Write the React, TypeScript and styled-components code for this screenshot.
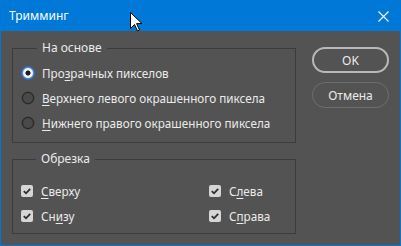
import styled, { createGlobalStyle } from "styled-components";

const Global = createGlobalStyle`
  html, body { margin: 0; padding: 0; background: #535353; }
  body { font-family: "Noto Sans", "Open Sans", sans-serif; font-size: 11.7px; }
`;

const App = () => {
  return (
    <>
      <Global />
      <Window>
        <TitleBar>
          <Title>Тримминг</Title>
          <Close>
            <svg width="11" height="11" viewBox="0 0 11 11">
              <path d="M0.5 0.5 L10.5 10.5 M10.5 0.5 L0.5 10.5" stroke="#fff" strokeWidth="1.1" />
            </svg>
          </Close>
          <Cursor width="13" height="20" viewBox="0 0 13 20">
            <path d="M0.5 0.5 L0.5 16.5 L4.5 12.5 L7.5 19 L9.5 18 L6.6 11.6 L12 11.6 Z" fill="#fff" stroke="#000" strokeWidth="1" />
          </Cursor>
        </TitleBar>
        <Body>
          <Groups>
            <Group $pad="4px 0 7px 9px">
              <Legend>На основе</Legend>
              <Row>
                <Radio $checked />
                <Label>Про<U>з</U>рачных пикселов</Label>
              </Row>
              <Row>
                <Radio />
                <Label><U>В</U>ерхнего левого окрашенного пиксела</Label>
              </Row>
              <Row>
                <Radio />
                <Label><U>Н</U>ижнего правого окрашенного пиксела</Label>
              </Row>
            </Group>
            <Group $pad="11px 0 5px 8px">
              <Legend>Обрезка</Legend>
              <Checks>
                <Row>
                  <Check><CheckMark /></Check>
                  <Label><U>С</U>верху</Label>
                </Row>
                <Row>
                  <Check><CheckMark /></Check>
                  <Label>С<U>л</U>ева</Label>
                </Row>
                <Row>
                  <Check><CheckMark /></Check>
                  <Label>Сн<U>и</U>зу</Label>
                </Row>
                <Row>
                  <Check><CheckMark /></Check>
                  <Label>С<U>п</U>рава</Label>
                </Row>
              </Checks>
            </Group>
          </Groups>
          <Buttons>
            <Button $primary>OK</Button>
            <Button>Отмена</Button>
          </Buttons>
        </Body>
      </Window>
    </>
  );
};
export default App;

const CheckMark = () => (
  <svg width="12" height="12" viewBox="0 0 12 12">
    <path d="M2.8 6.2 L5 8.3 L9.2 3.8" fill="none" stroke="#2e2e2e" strokeWidth="1.8" />
  </svg>
);

const Window = styled.div`
  width: 401px;
  height: 246px;
  box-sizing: border-box;
  border: 1px solid #0078d7;
  border-top: none;
  background: #535353;
  color: #ebebeb;
  overflow: hidden;
`;

const TitleBar = styled.div`
  position: relative;
  height: 31px;
  margin: 0 -1px;
  background: #0078d7;
  display: flex;
  align-items: center;
  justify-content: space-between;
  padding: 0 12px 0 9px;
`;

const Title = styled.span`
  color: #fff;
  font-size: 12px;
`;

const Close = styled.span`
  display: flex;
  padding-top: 1px;
`;

const Cursor = styled.svg`
  position: absolute;
  left: 130px;
  top: 12px;
`;

const Body = styled.div`
  display: flex;
  padding: 9px 0 0 11px;
  gap: 16px;
`;

const Groups = styled.div`
  display: flex;
  flex-direction: column;
  gap: 8px;
  width: 284px;
`;

const Group = styled.fieldset<{ $pad: string }>`
  margin: 0;
  padding: ${(p) => p.$pad};
  border: 1px solid #3c3c3c;
  min-width: 0;
`;

const Legend = styled.legend`
  margin-left: 15px;
  padding: 0 5px;
  line-height: 16px;
  font-size: 12px;
  color: #ebebeb;
`;

const Row = styled.div`
  display: flex;
  align-items: center;
  height: 25px;
  gap: 8px;
`;

const Checks = styled.div`
  display: grid;
  grid-template-columns: 188px 1fr;
`;

const Radio = styled.span<{ $checked?: boolean }>`
  box-sizing: border-box;
  width: 12px;
  height: 12px;
  border-radius: 50%;
  flex-shrink: 0;
  border: 1px solid ${(p) => (p.$checked ? "#4d8fdc" : "#262626")};
  background: ${(p) => (p.$checked ? "radial-gradient(circle, #1e1e1e 0 2.3px, #f2f2f2 2.8px)" : "#4a4a4a")};
  box-shadow: ${(p) => (p.$checked ? "0 0 0 1px #2f6fbf" : "0 0 0 0.5px #3a3a3a")};
`;

const Check = styled.span`
  box-sizing: border-box;
  width: 12px;
  height: 12px;
  border-radius: 2px;
  background: #d6d6d6;
  display: flex;
  flex-shrink: 0;
`;

const Label = styled.span`
  white-space: nowrap;
`;

const U = styled.span`
  text-decoration: underline;
  text-underline-offset: 2px;
`;

const Buttons = styled.div`
  display: flex;
  flex-direction: column;
  gap: 9px;
  padding-top: 7px;
`;

const Button = styled.button<{ $primary?: boolean }>`
  width: 77px;
  height: 26px;
  border-radius: 13px;
  background: transparent;
  border: ${(p) => (p.$primary ? "2px solid #b8b8b8" : "1.5px solid #6e6e6e")};
  color: #ebebeb;
  font-family: "Noto Sans", sans-serif;
  font-size: 12px;
  padding: 0;
`;
